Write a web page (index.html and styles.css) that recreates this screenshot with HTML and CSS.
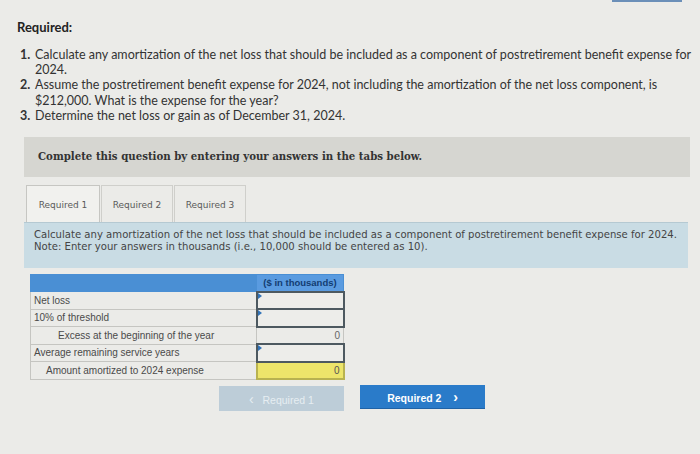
FILE: index.html
```html
<!DOCTYPE html>
<html>
<head>
<meta charset="utf-8">
<link rel="stylesheet" href="styles.css">
</head>
<body>
<div class="page">
  <div class="topbar"></div>
  <h2 class="req-title">Required:</h2>
  <ol class="req-list">
    <li><span class="num">1.</span><span>Calculate any amortization of the net loss that should be included as a component of postretirement benefit expense for 2024.</span></li>
    <li><span class="num">2.</span><span>Assume the postretirement benefit expense for 2024, not including the amortization of the net loss component, is $212,000. What is the expense for the year?</span></li>
    <li><span class="num">3.</span><span>Determine the net loss or gain as of December 31, 2024.</span></li>
  </ol>

  <div class="complete-box">Complete this question by entering your answers in the tabs below.</div>

  <div class="tabs">
    <div class="tab active">Required 1</div>
    <div class="tab">Required 2</div>
    <div class="tab">Required 3</div>
  </div>
  <div class="panel">
    <p>Calculate any amortization of the net loss that should be included as a component of postretirement benefit expense for 2024.</p>
    <p>Note: Enter your answers in thousands (i.e., 10,000 should be entered as 10).</p>
  </div>

  <table class="grid">
    <tr class="head"><td class="lbl"></td><td class="val">($ in thousands)</td></tr>
    <tr><td class="lbl">Net loss</td><td class="input"><span class="tri"></span></td></tr>
    <tr><td class="lbl">10% of threshold</td><td class="input"><span class="tri"></span></td></tr>
    <tr><td class="lbl ind1">Excess at the beginning of the year</td><td class="calc">0</td></tr>
    <tr><td class="lbl">Average remaining service years</td><td class="input"><span class="tri"></span></td></tr>
    <tr><td class="lbl ind2">Amount amortized to 2024 expense</td><td class="calc yellow">0</td></tr>
  </table>

  <div class="nav">
    <button class="btn prev"><span class="chev">&lsaquo;</span>&nbsp;&nbsp;&nbsp;Required 1</button>
    <button class="btn next">Required 2&nbsp;&nbsp;&nbsp;&nbsp;<span class="chev">&rsaquo;</span></button>
  </div>
</div>
</body>
</html>
```
FILE: styles.css
```css
html, body {
  margin: 0;
  padding: 0;
  background: #ebebe8;
}
.page {
  width: 700px;
  height: 454px;
  position: relative;
  overflow: hidden;
  font-family: Lato, "Liberation Sans", sans-serif;
  color: #333;
}
.topbar {
  position: absolute;
  top: 0;
  left: 612px;
  width: 70px;
  height: 2px;
  background: #6b8fb8;
}
.req-title {
  margin: 0;
  padding: 19px 0 0 17px;
  font-size: 13px;
  font-weight: 700;
  line-height: 16px;
  color: #222;
}
.req-list {
  list-style: none;
  margin: 12px 0 0 0;
  padding: 0 0 0 20px;
  font-size: 12.5px;
  line-height: 15.2px;
}
.req-list li {
  display: flex;
}
.req-list .num {
  font-weight: 700;
  width: 15px;
  flex: none;
}
.complete-box {
  margin: 14px 10px 0 24px;
  height: 40px;
  box-sizing: border-box;
  padding: 13px 0 0 14px;
  background: #d6d6d1;
  font-family: "DejaVu Serif", serif;
  font-weight: 700;
  font-size: 10.2px;
  color: #333;
}
.tabs {
  display: flex;
  margin: 8px 0 0 26px;
  height: 37px;
}
.tab {
  width: 72px;
  box-sizing: border-box;
  border: 1px solid #cfcfcb;
  border-bottom: none;
  background: #ebebe8;
  font-family: "DejaVu Sans", sans-serif;
  font-size: 9px;
  color: #5a5a5a;
  text-align: center;
  padding-top: 14px;
  margin-right: 1px;
}
.tab.active {
  width: 74px;
  background: #f1f1ee;
  border-color: #c6c6c2;
}
.panel {
  margin: 0 12px 0 24px;
  height: 46px;
  box-sizing: border-box;
  padding: 6px 0 0 10px;
  background: #c9dce4;
  border-top: 1px solid #b5c9d2;
  font-family: "DejaVu Sans", sans-serif;
  font-size: 10.1px;
  line-height: 12px;
  color: #444;
}
.panel p {
  margin: 0;
}
.grid {
  margin: 6px 0 0 30px;
  border-collapse: collapse;
  font-family: "Liberation Sans", Arial, sans-serif;
  font-size: 10px;
  color: #4a4a4a;
}
.grid td {
  height: 17.5px;
  padding: 0;
  box-sizing: border-box;
}
.grid .lbl {
  width: 226px;
  border: 1px solid #c5c5c1;
  border-right: none;
  padding-left: 3px;
}
.grid .ind1 { padding-left: 27px; }
.grid .ind2 { padding-left: 15px; }
.grid td.input,
.grid td.calc,
.grid td.val {
  width: 87px;
}
.grid .head td {
  background: #4a8fd4;
  border: 1px solid #4a8fd4;
  height: 17px;
}
.grid .head td.val {
  background: #5a9be0;
  color: #133d72;
  font-weight: 700;
  font-size: 9.5px;
  text-align: center;
  border-left: 1px solid #3d7fc2;
}
.grid td.input {
  border: 2px solid #4d5960;
  position: relative;
  background: #ededea;
}
.grid .tri {
  position: absolute;
  top: 0;
  left: 0;
  width: 0;
  height: 0;
  border-top: 3px solid transparent;
  border-bottom: 3px solid transparent;
  border-left: 4px solid #3173b8;
}
.grid td.calc {
  text-align: right;
  padding-right: 3px;
  border: 1px solid #c5c5c1;
  color: #666;
}
.grid td.yellow {
  background: #ede56a;
  border: 2px solid #b8b250;
  color: #555;
}
.nav {
  display: flex;
  margin: 6px 0 0 219px;
  gap: 16px;
}
.btn {
  width: 125px;
  height: 25px;
  border: none;
  font-family: "Liberation Sans", Arial, sans-serif;
  font-size: 10.5px;
  padding: 0;
}
.btn.prev {
  background: #bdcdd8;
  color: #e6edf2;
}
.btn.next {
  background: #2a7bc9;
  color: #fff;
  font-weight: 700;
  height: 24px;
  margin-top: -1px;
  border-bottom: 1px solid #1f62a6;
}
.chev {
  font-size: 14px;
}
```
